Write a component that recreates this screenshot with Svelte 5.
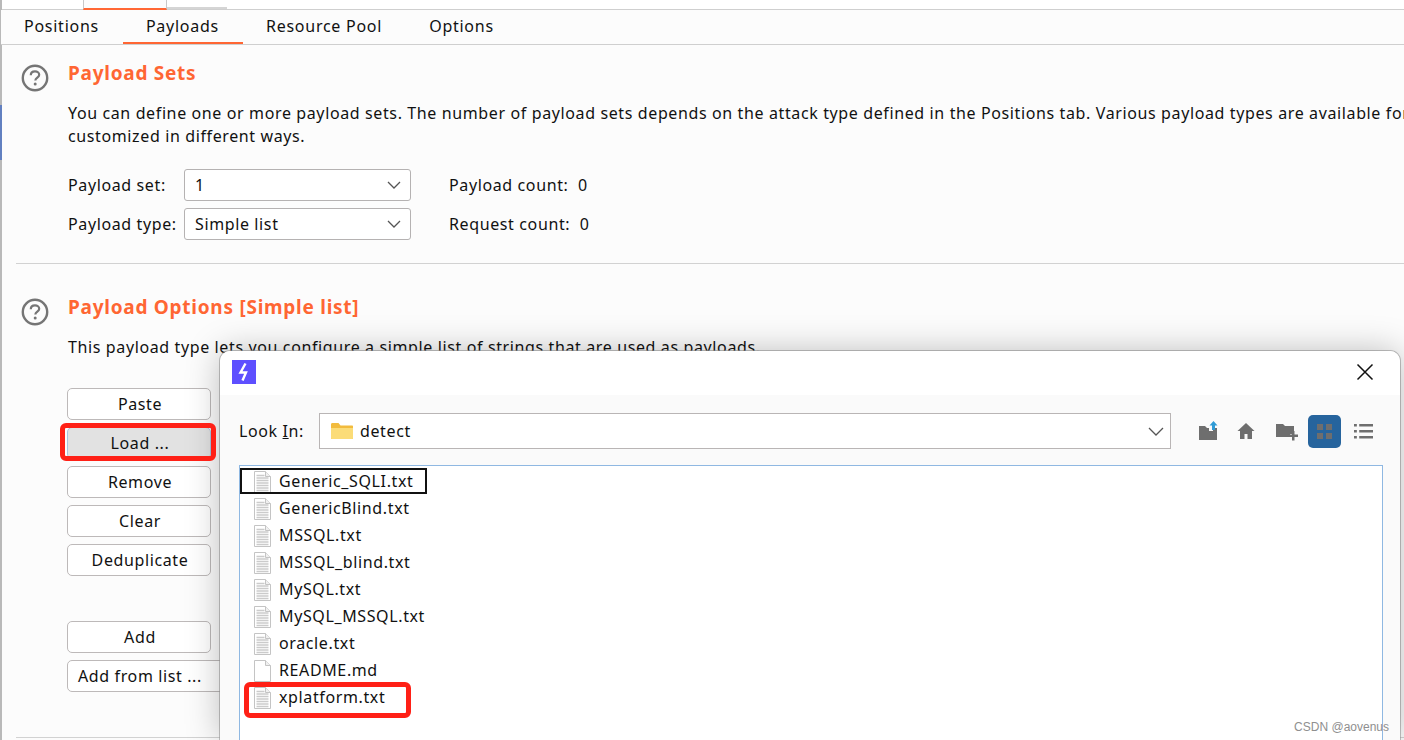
<script>
	const tabs = ['Positions', 'Payloads', 'Resource Pool', 'Options'];
	const files = [
		{ name: 'Generic_SQLI.txt', selected: true },
		{ name: 'GenericBlind.txt' },
		{ name: 'MSSQL.txt' },
		{ name: 'MSSQL_blind.txt' },
		{ name: 'MySQL.txt' },
		{ name: 'MySQL_MSSQL.txt' },
		{ name: 'oracle.txt' },
		{ name: 'README.md', blank: true },
		{ name: 'xplatform.txt' }
	];
	const lines = [4.5, 7, 9.5, 12, 14.5, 17, 19.5];
</script>

<div class="page">
	<div class="rail">
		<div class="rail-top"></div>
		<div class="rail-blue"></div>
		<div class="rail-rest"></div>
	</div>

	<main class="main">
		<div class="strip">
			<div class="strip-tab"></div>
			<div class="strip-end"></div>
		</div>

		<nav class="tabs">
			{#each tabs as tab}
				<div class="tab" class:active={tab === 'Payloads'}>{tab}</div>
			{/each}
		</nav>

		<section class="section first">
			<svg class="help" viewBox="0 0 28 28" width="28" height="28">
				<circle cx="14" cy="14" r="12.2" fill="none" stroke="#757575" stroke-width="2.4" />
				<path d="M9.8 11.2c0-2.5 1.900-3.900 4.200-3.900s4.200 1.400 4.200 3.500c0 2.700-3.600 2.900-3.900 5.700" fill="none" stroke="#757575" stroke-width="2.2" />
				<circle cx="14.2" cy="20" r="1.5" fill="#757575" />
			</svg>
			<div class="body">
				<h2>Payload Sets</h2>
				<p class="desc">You can define one or more payload sets. The number of payload sets depends on the attack type defined in the Positions tab. Various payload types are available for each payload set, and each payload type can be<br />customized in different ways.</p>
				<div class="form">
					<div class="form-row">
						<span class="label">Payload set:</span>
						<div class="select"><span>1</span>
							<svg viewBox="0 0 14 8" width="14" height="8"><path d="M1 1l6 6 6-6" fill="none" stroke="#555" stroke-width="1.3" /></svg>
						</div>
						<span class="count">Payload count:&nbsp; 0</span>
					</div>
					<div class="form-row">
						<span class="label">Payload type:</span>
						<div class="select"><span>Simple list</span>
							<svg viewBox="0 0 14 8" width="14" height="8"><path d="M1 1l6 6 6-6" fill="none" stroke="#555" stroke-width="1.3" /></svg>
						</div>
						<span class="count">Request count:&nbsp; 0</span>
					</div>
				</div>
			</div>
		</section>

		<div class="divider"></div>

		<section class="section second">
			<svg class="help" viewBox="0 0 28 28" width="28" height="28">
				<circle cx="14" cy="14" r="12.2" fill="none" stroke="#757575" stroke-width="2.4" />
				<path d="M9.8 11.2c0-2.5 1.900-3.900 4.200-3.900s4.200 1.400 4.200 3.500c0 2.700-3.600 2.900-3.900 5.700" fill="none" stroke="#757575" stroke-width="2.2" />
				<circle cx="14.2" cy="20" r="1.5" fill="#757575" />
			</svg>
			<div class="body">
				<h2>Payload Options [Simple list]</h2>
				<p class="desc">This payload type lets you configure a simple list of strings that are used as payloads.</p>
			</div>
		</section>

		<div class="buttons">
			<button>Paste</button>
			<button class="pressed">Load ...</button>
			<button>Remove</button>
			<button>Clear</button>
			<button>Deduplicate</button>
			<button class="gap">Add</button>
			<button class="from-list">Add from list ...</button>
		</div>

		<div class="divider bottom"></div>
	</main>

	<div class="dialog">
		<header class="titlebar">
			<div class="logo">
				<svg viewBox="0 0 24 24" width="24" height="24"><path d="M13.5 3.500L8.500 12.500H14L10.500 20.500" fill="none" stroke="#fff" stroke-width="2.4" /></svg>
			</div>
			<svg class="close" viewBox="0 0 18 18" width="18" height="18"><path d="M1.500 1.500l15 15M16.500 1.500l-15 15" stroke="#111" stroke-width="1.5" /></svg>
		</header>
		<div class="dialog-body">
			<div class="toolbar">
				<span class="look">Look <u>I</u>n:</span>
				<div class="combo">
					<svg viewBox="0 0 22 18" width="22" height="18">
						<path d="M0 2.500C0 1.500.6 1 1.500 1h6l2 2.500H21c.6 0 1 .4 1 1V16c0 .6-.4 1-1 1H1c-.6 0-1-.4-1-1z" fill="#f2bb3d" />
						<path d="M0 6h22v10c0 .6-.4 1-1 1H1c-.6 0-1-.4-1-1z" fill="#fbdc78" />
					</svg>
					<span class="combo-text">detect</span>
					<svg viewBox="0 0 16 9" width="16" height="9"><path d="M1 1l7 7 7-7" fill="none" stroke="#555" stroke-width="1.3" /></svg>
				</div>
				<div class="tools">
					<svg viewBox="0 0 20 20" width="20" height="20">
						<path d="M1 5h6l2 2h2v3h4V7h4v12H1z" fill="#6e6e6e" />
						<path d="M15.500 0l4 4.500h-2.500v4.500h-3V4.500h-2.500z" fill="#2f9bd6" />
					</svg>
					<svg viewBox="0 0 20 20" width="20" height="20"><path d="M10 2L1.500 10H4v8h4.500v-5h3v5H16v-8h2.500z" fill="#6e6e6e" /></svg>
					<svg class="new-folder" viewBox="0 0 22 20" width="22" height="20">
						<path d="M0 3h7l2 2h9v8h-4v3H0z" fill="#6e6e6e" />
						<path d="M16 10h2.500v3.500H22V16h-3.500v3.500H16V16h-3.500v-2.500H16z" fill="#6e6e6e" />
					</svg>
					<div class="grid-btn">
						<span></span><span></span><span></span><span></span>
					</div>
					<svg viewBox="0 0 20 16" width="19" height="16" preserveAspectRatio="none">
						<path d="M0 1h3v2.500H0zM5.500 1H20v2.500H5.500zM0 7h3v2.500H0zM5.500 7H20v2.500H5.500zM0 13h3v2.500H0zM5.500 13H20v2.500H5.500z" fill="#6e6e6e" />
					</svg>
				</div>
			</div>
			<div class="list">
				{#each files as file}
					<div class="file">
						<svg viewBox="0 0 17 22" width="17" height="22">
							<path d="M.5.500h11l5 5v16H.5z" fill="#fff" stroke="#c4c4c4" />
							<path d="M11.500.500v5h5" fill="#f0f0f0" stroke="#c4c4c4" />
							{#if !file.blank}
								{#each lines as y}
									<path d="M2.500 {y}h{y < 6 ? 8 : 12}" stroke="#cbcbcb" stroke-width="1.5" />
								{/each}
							{/if}
						</svg>
						<span class="file-name" class:selected={file.selected}>{file.name}</span>
					</div>
				{/each}
			</div>
		</div>
	</div>

	<div class="mark mark-load"></div>
	<div class="mark mark-file"></div>
	<div class="watermark">CSDN @aovenus</div>
</div>

<style>
	:global(body) {
		margin: 0;
	}

	.page {
		position: relative;
		display: flex;
		width: 1404px;
		height: 740px;
		overflow: hidden;
		background: #fcfcfc;
		color: #111;
		font-family: "Noto Sans", sans-serif;
		font-size: 16px;
		letter-spacing: 0.62px;
	}

	.rail {
		display: flex;
		flex-direction: column;
		flex: none;
		width: 2px;
	}

	.rail-top {
		height: 105px;
		background: #b9b9b9;
	}

	.rail-blue {
		height: 55px;
		background: #6280c0;
	}

	.rail-rest {
		flex: 1;
		background: #b9b9b9;
	}

	.main {
		flex: 1;
		min-width: 0;
	}

	.strip {
		display: flex;
		box-sizing: border-box;
		height: 10px;
		border-bottom: 1px solid #cfcfcf;
		background: #fff;
	}

	.strip-tab {
		box-sizing: border-box;
		width: 84px;
		height: 10px;
		margin-left: 81px;
		border-left: 1px solid #c8c8c8;
		border-right: 1px solid #c8c8c8;
		border-bottom: 2px solid #ff6633;
		background: #fcfcfc;
	}

	.strip-end {
		box-sizing: border-box;
		width: 60px;
		height: 9px;
		border-bottom: 2px solid #d5d5d5;
	}

	.tabs {
		display: flex;
		box-sizing: border-box;
		height: 35px;
		margin-left: -1px;
		border-bottom: 1px solid #cfcfcf;
		background: #fcfcfc;
		letter-spacing: 0.74px;
	}

	.tab {
		box-sizing: border-box;
		height: 34px;
		padding: 5px 24px 0 23px;
		line-height: 22px;
	}

	.tab.active {
		border-bottom: 2px solid #ff6633;
	}

	.section {
		display: flex;
		gap: 19px;
		padding-left: 19px;
	}

	.first {
		padding-top: 14px;
	}

	.second {
		padding-top: 29px;
	}

	.help {
		flex: none;
		margin-top: 5px;
	}

	.body {
		flex: 1;
		min-width: 0;
	}

	h2 {
		margin: 0;
		color: #ff6633;
		font-size: 19px;
		font-weight: 700;
		line-height: 28px;
		letter-spacing: 0.74px;
	}

	.desc {
		margin: 15px 0 0;
		line-height: 23px;
		white-space: nowrap;
	}

	.form {
		display: flex;
		flex-direction: column;
		gap: 7px;
		margin-top: 21px;
	}

	.form-row {
		display: flex;
		align-items: center;
	}

	.label {
		width: 116px;
	}

	.select {
		display: flex;
		align-items: center;
		justify-content: space-between;
		box-sizing: border-box;
		width: 227px;
		height: 32px;
		padding: 0 9px 0 10px;
		border: 1px solid #b5b2b2;
		border-radius: 3px;
		background: #fff;
	}

	.count {
		margin-left: 38px;
	}

	.divider {
		height: 1px;
		margin: 23px 0 0 14px;
		background: #d2d2d2;
	}

	.buttons {
		display: flex;
		flex-direction: column;
		align-items: flex-start;
		gap: 7px;
		margin: 29px 0 0 65px;
	}

	button {
		box-sizing: border-box;
		width: 144px;
		height: 32px;
		padding: 0 0 0 2px;
		border: 1.5px solid #bdb9b9;
		border-radius: 5px;
		background: #fff;
		color: #111;
		font: inherit;
		letter-spacing: inherit;
	}

	button.pressed {
		border-color: #a9c4e0;
		background: #e2e2e2;
	}

	button.gap {
		margin-top: 38px;
	}

	button.from-list {
		width: 170px;
		padding-left: 10px;
		text-align: left;
	}

	.bottom {
		margin-top: 45px;
	}

	.dialog {
		position: absolute;
		left: 220px;
		top: 351px;
		display: flex;
		flex-direction: column;
		width: 1180px;
		height: 389px;
		border-top-left-radius: 10px;
		border-top-right-radius: 10px;
		background: #fafafa;
		box-shadow: 0 0 34px rgba(0, 0, 0, 0.26), 0 0 0 1px rgba(160, 160, 160, 0.6);
	}

	.titlebar {
		display: flex;
		align-items: center;
		justify-content: space-between;
		flex: none;
		box-sizing: border-box;
		height: 44px;
		padding: 0 26px 2px 12px;
		border-top-left-radius: 10px;
		border-top-right-radius: 10px;
		background: #fff;
	}

	.logo {
		display: flex;
		width: 24px;
		height: 24px;
		background: #5e4fff;
	}

	.dialog-body {
		flex: 1;
		min-height: 0;
		padding: 18px 17px 0 19px;
	}

	.toolbar {
		display: flex;
		align-items: center;
		height: 36px;
	}

	.look {
		flex: none;
		width: 80px;
	}

	.combo {
		display: flex;
		align-items: center;
		gap: 7px;
		flex: none;
		box-sizing: border-box;
		width: 852px;
		height: 36px;
		padding: 0 6px 0 11px;
		border: 1.5px solid #b9b5b5;
		background: #fff;
	}

	.combo-text {
		flex: 1;
	}

	.tools {
		display: flex;
		align-items: center;
		gap: 18px;
		margin-left: 27px;
	}

	.new-folder {
		margin-left: 2px;
	}

	.grid-btn {
		display: grid;
		grid-template-columns: 6px 6px;
		grid-auto-rows: 6px;
		gap: 3px;
		place-content: center;
		width: 33px;
		height: 33px;
		margin: 0 -5px 0 -8px;
		border-radius: 5px;
		background: #26649d;
	}

	.grid-btn span {
		background: #6e6e6e;
	}

	.list {
		box-sizing: border-box;
		height: 291px;
		margin-top: 16px;
		padding: 2px 0 0 1px;
		border: 1px solid #8fb8e2;
		background: #fff;
	}

	.file {
		display: flex;
		align-items: center;
		gap: 8px;
		height: 27px;
		padding-left: 13px;
	}

	.file-name {
		box-sizing: border-box;
		height: 25px;
		line-height: 25px;
		padding-right: 12px;
	}

	.file-name.selected {
		flex: none;
		height: 26px;
		margin: 0 0 1px -39px;
		padding-left: 37px;
		border: 2px solid #111;
		line-height: 22px;
	}

	.mark {
		position: absolute;
		box-sizing: border-box;
		border: 5px solid #ff2016;
		border-radius: 6px;
	}

	.mark-load {
		left: 60px;
		top: 423px;
		width: 156px;
		height: 38px;
	}

	.mark-file {
		left: 244px;
		top: 682px;
		width: 167px;
		height: 36px;
	}

	.watermark {
		position: absolute;
		right: 15px;
		bottom: 6px;
		color: #8f8f8f;
		font-family: "Liberation Sans", sans-serif;
		font-size: 12px;
		letter-spacing: 0;
	}
</style>
